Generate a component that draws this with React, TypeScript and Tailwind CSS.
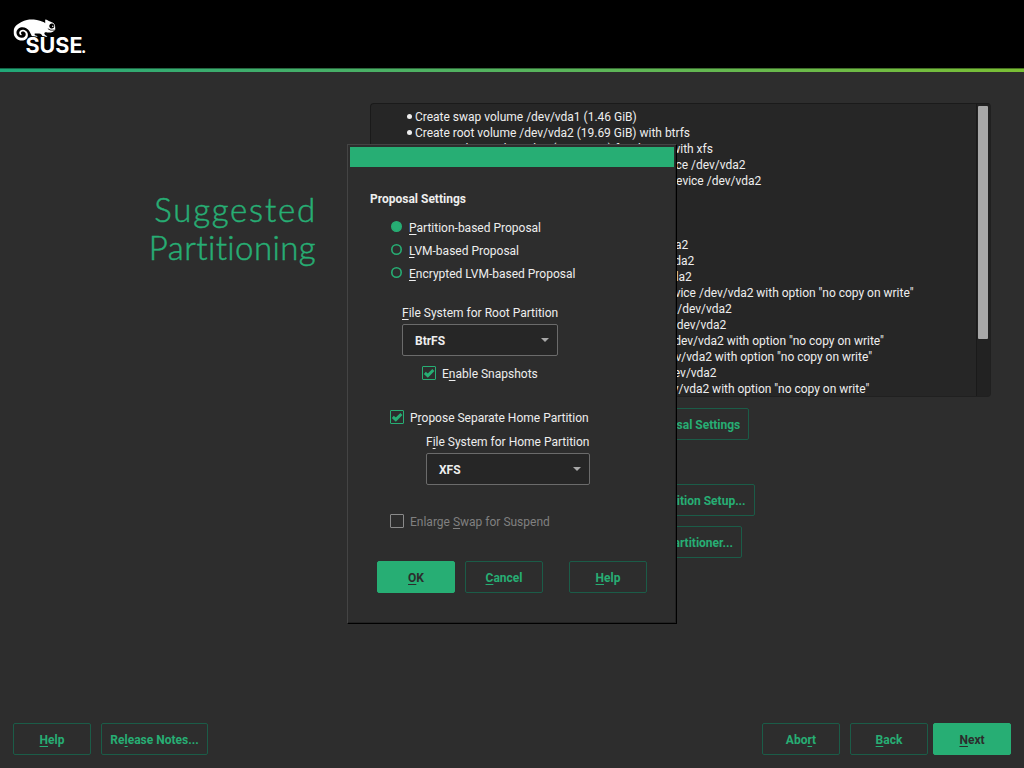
import React from "react";
import { SiSuse } from "react-icons/si";

function Mnemonic({ label, index }: { label: string; index: number }) {
  return (
    <span className="whitespace-pre">
      {label.slice(0, index)}
      <span className="underline decoration-1 underline-offset-2 [text-decoration-skip-ink:none]">
        {label[index]}
      </span>
      {label.slice(index + 1)}
    </span>
  );
}

type ButtonProps = { label: string; mnemonic?: number; primary?: boolean; className?: string };

function Button({ label, mnemonic = 0, primary = false, className = "w-[78px]" }: ButtonProps) {
  const tone = primary
    ? "border-[#27ae74] bg-[#27ae74] text-[#2c2c2c]"
    : "border-[#1b5c48] text-[#27ae74]";
  return (
    <button
      className={`flex h-8 shrink-0 items-center justify-center rounded-[2px] border pt-px font-bold ${tone} ${className}`}
    >
      <Mnemonic label={label} index={mnemonic} />
    </button>
  );
}

function Radio({ label, checked = false }: { label: string; checked?: boolean }) {
  return (
    <label className="flex h-[23px] items-center">
      <svg viewBox="0 0 11 11" className="-mt-0.5 mr-[7px] size-[11px] text-[#27ae74]">
        <circle
          cx="5.5"
          cy="5.5"
          r="4.7"
          fill={checked ? "currentColor" : "none"}
          stroke="currentColor"
          strokeWidth="1.6"
        />
      </svg>
      <Mnemonic label={label} index={0} />
    </label>
  );
}

type CheckProps = { label: string; mnemonic: number; checked?: boolean; className?: string };

function Checkbox({ label, mnemonic, checked = false, className = "" }: CheckProps) {
  return (
    <label className={`flex h-4 items-start ${checked ? "" : "text-[#808080]"} ${className}`}>
      <span
        className={`mt-px mr-1.5 flex size-3.5 items-center justify-center rounded-[1px] border ${checked ? "border-[#27ae74]" : "border-[#8a8a8a]"}`}
      >
        {checked && (
          <svg viewBox="0 0 12 12" className="size-3 shrink-0 text-[#27ae74]">
            <path d="M1.8 5.8 L4.8 8.6 L10.4 3" fill="none" stroke="currentColor" strokeWidth="3" />
          </svg>
        )}
      </span>
      <span className="pt-px">
        <Mnemonic label={label} index={mnemonic} />
      </span>
    </label>
  );
}

function Select({ value, className }: { value: string; className: string }) {
  return (
    <div
      className={`flex h-8 items-center justify-between rounded-[2px] border border-[#6b6b6b] bg-[#262626] pr-2 pl-3 font-bold ${className}`}
    >
      <span className="pt-px">{value}</span>
      <svg viewBox="0 0 8 4" className="h-1 w-2">
        <path d="M0 0H8L4 4Z" fill="#a8a8a8" />
      </svg>
    </div>
  );
}

const noCow = ' with option "no copy on write"';
const subvolume = (name: string, suffix = "") => `Create subvolume @/${name} on device /dev/vda2${suffix}`;

const actions = [
  "Create swap volume /dev/vda1 (1.46 GiB)",
  "Create root volume /dev/vda2 (19.69 GiB) with btrfs",
  "Create volume /dev/vda3 (18.84 GiB) for /home with xfs",
  subvolume("boot/grub2/i386-pc"),
  subvolume("boot/grub2/x86_64-efi"),
  subvolume("opt"),
  subvolume("srv"),
  subvolume("tmp"),
  subvolume("usr/local"),
  subvolume("var/cache"),
  subvolume("var/crash"),
  subvolume("var/lib/libvirt/images", noCow),
  subvolume("var/lib/machines"),
  subvolume("var/lib/mailman"),
  subvolume("var/lib/mariadb", noCow),
  subvolume("var/lib/mysql", noCow),
  subvolume("var/lib/named"),
  subvolume("var/lib/pgsql", noCow),
];

function Dialog() {
  return (
    <div
      role="dialog"
      className="absolute top-[144px] left-[347px] flex h-[480px] w-[330px] flex-col border border-t-[#444] border-r-black border-b-black border-l-[#444] bg-[#2d2d2d] px-0.5 pt-0.5 shadow-[inset_-1px_-1px_0_#222]"
    >
      <div className="h-5 w-[324px] shrink-0 bg-[#27ae74]" />
      <div className="flex flex-col pt-6 pl-5">
        <h2 className="h-4 font-bold">Proposal Settings</h2>
        <div className="mt-[9px] ml-[21px] flex flex-col">
          <Radio label="Partition-based Proposal" checked />
          <Radio label="LVM-based Proposal" />
          <Radio label="Encrypted LVM-based Proposal" />
        </div>
        <div className="mt-5 ml-8">
          <div className="mb-[3px] h-4">
            <Mnemonic label="File System for Root Partition" index={0} />
          </div>
          <Select value="BtrFS" className="w-[156px]" />
        </div>
        <Checkbox label="Enable Snapshots" mnemonic={1} checked className="mt-[9px] ml-[52px]" />
        <Checkbox label="Propose Separate Home Partition" mnemonic={1} checked className="mt-7 ml-5" />
        <div className="mt-[9px] ml-14">
          <div className="mb-[3px] h-4">
            <Mnemonic label="File System for Home Partition" index={1} />
          </div>
          <Select value="XFS" className="w-[164px]" />
        </div>
        <Checkbox label="Enlarge Swap for Suspend" mnemonic={8} className="mt-7 ml-5" />
        <div className="mt-8 ml-[7px] flex">
          <Button label="OK" primary />
          <Button label="Cancel" className="ml-2.5 w-[78px]" />
          <Button label="Help" className="ml-[26px] w-[78px]" />
        </div>
      </div>
    </div>
  );
}

function Logo() {
  return (
    <svg viewBox="0 0 80 60" className="h-[60px] w-20 text-white">
      <SiSuse x="1.5" y="1" size={42} />
      <g
        fill="currentColor"
        stroke="#000"
        strokeWidth="1.5"
        paintOrder="stroke"
        fontFamily="Inter, sans-serif"
        fontWeight="700"
        fontSize="21"
      >
        <text x="13.5" y="44.5" textLength="57" lengthAdjust="spacingAndGlyphs">
          SUSE
        </text>
        <text x="69" y="44.5" fontSize="16">
          .
        </text>
      </g>
    </svg>
  );
}

export default function App() {
  return (
    <div className="relative flex h-[768px] w-[1024px] flex-col overflow-hidden bg-[#2d2d2d] font-[Roboto,sans-serif] text-[12px] leading-4 text-[#eee]">
      <header className="h-[68px] shrink-0 bg-black pt-2 pl-3">
        <Logo />
      </header>
      <div className="h-1 shrink-0 border-t border-black/40 bg-linear-to-r from-[#20a878] to-[#7abf34] [background-origin:border-box]" />
      <main className="flex grow">
        <h1 className="flex w-[317px] shrink-0 flex-col items-end pt-[118px] font-[Lato,sans-serif] text-[33px] leading-[38px] font-light text-[#27ae74] [-webkit-text-stroke:0.5px_#27ae74]">
          <span className="tracking-[1.8px]">Suggested</span>
          <span className="pr-px tracking-[0.4px]">Partitioning</span>
        </h1>
        <section className="mt-[31px] ml-[53px] flex w-[621px] flex-col items-center">
          <div className="flex h-[294px] w-full overflow-hidden rounded-[4px] border border-[#1a1a1a] border-r-[#202020] border-b-[#202020] bg-[#262626]">
            <ul className="grow pt-[5px] pl-9 tracking-[-0.01px]">
              {actions.map((action) => (
                <li key={action} className="flex h-4 items-center whitespace-pre">
                  <span className="-mt-0.5 mr-[3px] size-[5px] rounded-full bg-[#eee]" />
                  {action}
                </li>
              ))}
            </ul>
            <div className="w-[14px] border-l border-[#1a1a1a] bg-[#222] pt-0.5 pl-px">
              <div className="h-[233px] w-[10px] rounded-[1px] bg-[#a8a8a8]" />
            </div>
          </div>
          <Button label="Edit Proposal Settings" className="mt-[11px] w-[137px]" />
          <Button label="Create Partition Setup..." className="mt-11 w-[149px]" />
          <Button label="Expert Partitioner..." className="mt-2.5 w-[123px]" />
        </section>
      </main>
      <footer className="flex h-[45px] shrink-0 pr-[13px] pl-[13px]">
        <Button label="Help" />
        <Button label="Release Notes..." mnemonic={2} className="mr-auto ml-2.5 w-[107px]" />
        <Button label="Abort" mnemonic={3} />
        <Button label="Back" className="ml-2.5 w-[78px]" />
        <Button label="Next" primary className="ml-[5px] w-[78px]" />
      </footer>
      <Dialog />
    </div>
  );
}
